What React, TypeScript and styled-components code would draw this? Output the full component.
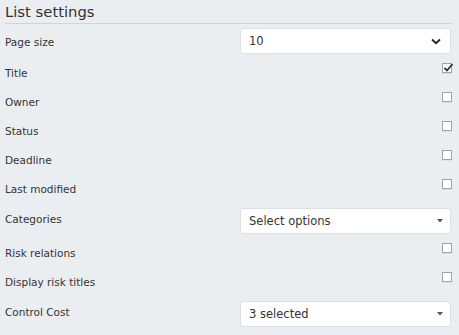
import React from "react";
import styled, { createGlobalStyle } from "styled-components";

const GlobalStyle = createGlobalStyle`
  html, body {
    margin: 0;
    padding: 0;
    background: #ebeef1;
  }
  body {
    font-family: "DejaVu Sans", Verdana, sans-serif;
    color: #333;
  }
`;

const Panel = styled.section`
  width: 459px;
  height: 335px;
  box-sizing: border-box;
  padding: 0 7px 0 5px;
  overflow: hidden;
`;

const Heading = styled.h2`
  margin: 0 0 4px;
  height: 23px;
  font-size: 14.8px;
  font-weight: normal;
  line-height: 24px;
  color: #333;
  border-bottom: 1px solid #d3d3d3;
`;

const Row = styled.div<{ $select?: boolean }>`
  display: flex;
  justify-content: space-between;
  align-items: ${({ $select }) => ($select ? "center" : "flex-start")};
  height: ${({ $select }) => ($select ? "26px" : "29px")};
  padding-bottom: ${({ $select }) => ($select ? "9px" : "0")};
`;

const Label = styled.span<{ $shift?: number }>`
  font-size: 10.5px;
  line-height: 20px;
  color: #333;
  position: relative;
  top: ${({ $shift }) => $shift ?? 0}px;
`;

const SelectBox = styled.div`
  width: 211px;
  height: 26px;
  box-sizing: border-box;
  margin-right: 1px;
  background: #fff;
  border: 1px solid #dde0e4;
  border-radius: 3px;
  display: flex;
  align-items: center;
  justify-content: space-between;
  padding: 0 9px 0 8px;
  font-size: 11.5px;
  color: #333;
`;

const Box = styled.span`
  width: 10px;
  height: 10px;
  box-sizing: border-box;
  background: #fff;
  border: 1px solid #a3a3a3;
  box-shadow: 0 1px 0 rgba(0, 0, 0, 0.06);
  position: relative;
  display: block;
`;

const Tick = styled.svg`
  position: absolute;
  left: 0;
  top: -1px;
`;

const Chevron = () => (
  <svg width="10" height="7" viewBox="0 0 10 7">
    <path d="M1 1.5 L5 5.2 L9 1.5" fill="none" stroke="#222" strokeWidth="1.9" />
  </svg>
);

const Caret = () => (
  <svg width="8" height="4" viewBox="0 0 8 4" style={{ marginRight: -3 }}>
    <path d="M1 0 H7 L4 3.5 Z" fill="#555" />
  </svg>
);

type Item =
  | { kind: "select"; label: string; value: string; chevron?: boolean; shift: number }
  | { kind: "check"; label: string; checked?: boolean };

const items: Item[] = [
  { kind: "select", label: "Page size", value: "10", chevron: true, shift: 1 },
  { kind: "check", label: "Title", checked: true },
  { kind: "check", label: "Owner" },
  { kind: "check", label: "Status" },
  { kind: "check", label: "Deadline" },
  { kind: "check", label: "Last modified" },
  { kind: "select", label: "Categories", value: "Select options", shift: -2 },
  { kind: "check", label: "Risk relations" },
  { kind: "check", label: "Display risk titles" },
  { kind: "select", label: "Control Cost", value: "3 selected", shift: -2 },
];

const App: React.FC = () => (
  <>
    <GlobalStyle />
    <Panel>
      <Heading>List settings</Heading>
      {items.map((item) =>
        item.kind === "select" ? (
          <Row $select key={item.label}>
            <Label $shift={item.shift}>{item.label}</Label>
            <SelectBox>
              <span>{item.value}</span>
              {item.chevron ? <Chevron /> : <Caret />}
            </SelectBox>
          </Row>
        ) : (
          <Row key={item.label}>
            <Label>{item.label}</Label>
            <Box>
              {item.checked && (
                <Tick width="10" height="10" viewBox="0 0 10 10">
                  <path d="M1.5 4.8 L4 7.5 L9.5 1" fill="none" stroke="#1d2d44" strokeWidth="1.8" />
                </Tick>
              )}
            </Box>
          </Row>
        )
      )}
    </Panel>
  </>
);

export default App;
